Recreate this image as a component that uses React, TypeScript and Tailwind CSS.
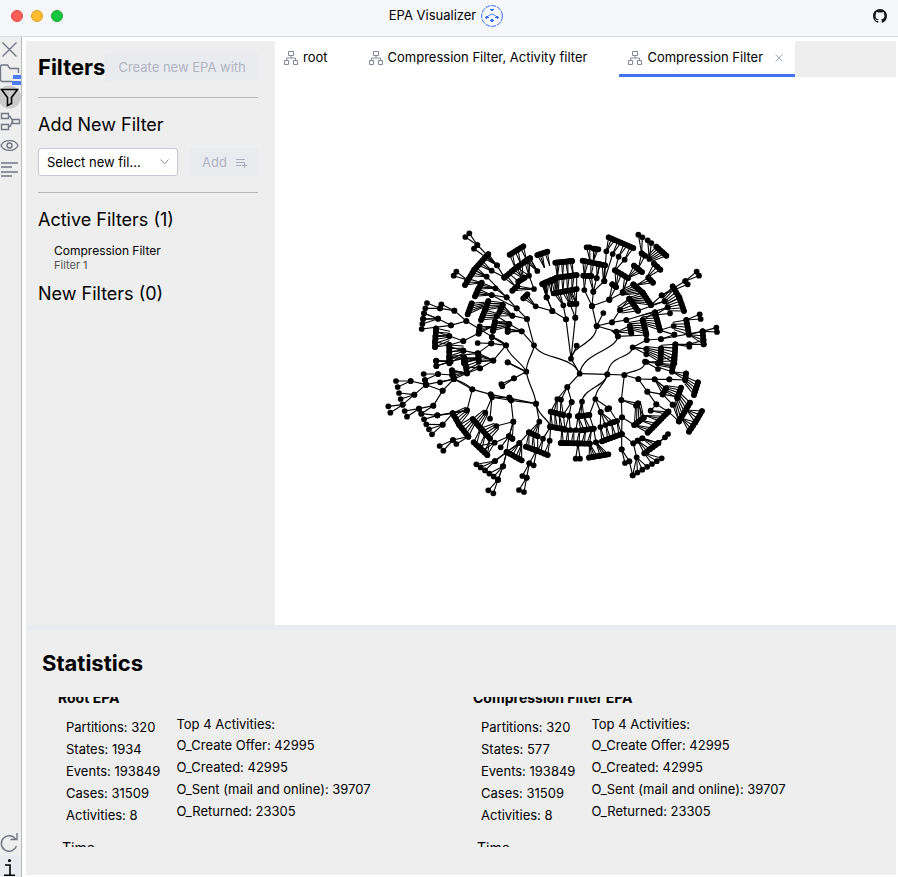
import React from "react";

// Tree drawing. Every quadrant has its own origin.
// link: parent x, y followed by its children
// fan: parent x, y, first child x, y, last child x, y, number of children
// row: first and last parent, number of parents, first and last child, number of children
type Quadrant = { x: number; y: number; links: number[][]; fans: number[][]; rows: number[][]; curves: string[] };

const quadrants: Quadrant[] = [
  {
    x: 0,
    y: 0,
    links: [
      [292, 60, 268, 25, 256, 36], [351, 121, 292, 60, 282, 71], [373, 157, 351, 121, 335, 137],
      [262, 165, 229, 140, 221, 152], [380, 217, 346, 190, 335, 210, 320, 155],
      [410, 250, 380, 217, 335, 210], [441, 282, 397, 272, 410, 250], [397, 272, 368, 240, 350, 273],
      [425, 319, 388, 297, 383, 312, 383, 320], [388, 297, 345, 290, 350, 273],
      [462, 361, 441, 282, 425, 319], [378, 361, 336, 336, 334, 355, 259, 288], [334, 355, 293, 354],
      [223, 257, 184, 238, 180, 250], [259, 288, 223, 257, 213, 301], [213, 301, 174, 281, 125, 312],
      [174, 281, 132, 265, 129, 283], [180, 250, 141, 234, 136, 250],
      [208, 333, 168, 320, 166, 335], [250, 348, 208, 333, 208, 360], [296, 325, 250, 348],
      [208, 360, 165, 350, 165, 366], [250, 377, 208, 365, 208, 380], [293, 385, 250, 377, 208, 395],
      [334, 355, 293, 385], [340, 406, 378, 361, 295, 390], [295, 400, 252, 400, 252, 412],
      [252, 400, 208, 398, 208, 410], [208, 408, 168, 408],
      [472, 138, 450, 100], [462, 192, 447, 152], [500, 217, 487, 177, 493, 180],
      [517, 258, 467, 244, 500, 217], [383, 412], [336, 336, 339, 317],
    ],
    fans: [
      [472, 138, 450, 100, 436, 108, 3],
      [346, 190, 305, 173, 295, 192, 4], [335, 210, 295, 192, 285, 214, 4],
      [310, 240, 275, 235, 263, 268, 5], [368, 240, 325, 228, 315, 255, 5],
      [350, 273, 315, 255, 303, 285, 5], [397, 272, 368, 240, 358, 262, 4], [335, 305, 299, 304, 296, 326, 4],
      [388, 297, 345, 290, 339, 317, 5], [425, 319, 383, 312, 383, 320, 2], [174, 281, 132, 265, 127, 297, 3],
      [208, 333, 168, 310, 165, 366, 6], [250, 377, 208, 360, 208, 415, 6], [295, 400, 252, 398, 252, 415, 3],
      [340, 406, 295, 385, 296, 405, 3], [447, 152, 434, 158, 415, 170, 4], [462, 192, 412, 183, 397, 197, 3],
      [467, 244, 430, 220, 442, 208, 3],
    ],
    rows: [
      [351, 121, 320, 155, 3, 325, 87, 283, 134, 8], [320, 155, 305, 173, 2, 283, 134, 255, 180, 6],
      [405, 128, 440, 106, 3, 389, 89, 430, 64, 6], [405, 183, 447, 152, 4, 373, 158, 410, 127, 6],
      [430, 165, 447, 152, 2, 410, 127, 450, 100, 6], [493, 127, 509, 121, 2, 472, 90, 502, 80, 5],
      [500, 217, 525, 210, 2, 487, 177, 525, 165, 5],
    ],
    curves: ["M378 361C385 395 425 410 439 440", "M462 361C462 385 438 405 439 440", "M462 361C485 405 575 390 599 446", "M336 336Q365 345 378 361", "M383 412Q405 425 439 440"],
  },
  {
    x: 510,
    y: 0,
    links: [
      [7, 258, -10, 217], [48, 283, 7, 258, 40, 241], [63, 401, 48, 283, 76, 278, 80, 362], [76, 278, 60, 237, 79, 236],
      [126, 243, 103, 195, 130, 200], [140, 303, 126, 243], [160, 264, 140, 303], [130, 200, 140, 159, 163, 168],
      [163, 168, 165, 121], [140, 159, 150, 118], [218, 203, 234, 159], [178, 224, 187, 178, 198, 186],
      [126, 243, 178, 224], [178, 224, 218, 203], [210, 255, 238, 221], [186, 292, 210, 255, 229, 285], [140, 303, 186, 292],
      [275, 85, 265, 29, 277, 37], [298, 102, 293, 46, 304, 54], [335, 211, 406, 168, 413, 178],
      [406, 168, 440, 140, 447, 152], [303, 240, 335, 211, 344, 229], [264, 257, 344, 229], [229, 285, 353, 247],
      [315, 270, 353, 247, 360, 265], [278, 285, 315, 262], [330, 316, 371, 303, 373, 329],
      [409, 285, 449, 268, 452, 282], [204, 334, 289, 330], [248, 367, 290, 345, 289, 372],
      [290, 345, 333, 342], [333, 342, 373, 329, 458, 319], [458, 319, 499, 308, 501, 321],
      [376, 358, 418, 358, 418, 365], [418, 358, 461, 345, 461, 358], [289, 411, 331, 410],
      [163, 168, 169, 79, 188, 87], [195, 136, 206, 95, 224, 104],
    ],
    fans: [
      [60, 110, 60, 109, 66, 108, 2], [60, 200, 60, 237, 79, 236, 3],
      [120, 108, 110, 67, 119, 67, 2], [130, 108, 131, 71, 145, 73, 3],
      [198, 186, 187, 178, 198, 186, 2], [298, 102, 319, 65, 349, 92, 6],
      [265, 130, 275, 85, 285, 92, 2], [234, 159, 252, 122, 276, 141, 4], [290, 158, 312, 116, 331, 134, 3],
      [218, 203, 250, 178, 278, 203, 6], [250, 225, 278, 203, 303, 240, 6], [260, 180, 295, 158, 309, 173, 3],
      [210, 255, 238, 221, 264, 257, 5], [344, 229, 368, 184, 388, 218, 5], [353, 247, 388, 218, 402, 258, 5],
      [278, 285, 315, 262, 330, 316, 7], [239, 303, 278, 285, 289, 327, 6], [200, 321, 239, 303, 244, 325, 3],
      [186, 318, 199, 320, 204, 334, 2], [371, 303, 409, 285, 417, 329, 5], [417, 329, 458, 319, 461, 358, 4],
      [333, 375, 376, 358, 373, 415, 6], [289, 375, 333, 370, 331, 412, 6], [248, 367, 289, 372, 289, 388, 2],
    ],
    rows: [
      [22, 157, 70, 150, 4, 16, 113, 66, 108, 9], [-10, 217, 20, 203, 3, -20, 175, 20, 158, 6],
      [25, 202, 80, 192, 5, 20, 158, 80, 150, 9], [40, 241, 79, 236, 3, 12, 205, 80, 192, 9],
      [103, 152, 160, 165, 4, 98, 107, 165, 121, 9], [103, 195, 130, 200, 2, 100, 152, 124, 153, 4],
      [169, 79, 224, 104, 4, 176, 37, 250, 69, 9], [198, 186, 218, 203, 2, 195, 136, 234, 159, 5],
    ],
    curves: ["M63 401C63 365 140 355 140 303", "M89 446C100 380 195 380 204 334", "M172 448C180 385 240 405 248 367", "M63 401L89 446", "M140 303L199 320"],
  },
  {
    x: 0,
    y: 405,
    links: [
      [222, 57, 180, 67], [216, 45, 174, 42], [174, 42, 131, 42, 135, 60], [138, 74, 92, 63, 135, 60], [92, 63, 48, 63, 53, 81],
      [222, 57, 138, 74], [188, 92, 138, 74, 160, 137], [138, 74, 103, 104], [103, 104, 57, 99, 62, 117, 68, 134], [68, 134, 25, 139, 31, 158],
      [160, 137, 117, 146, 124, 161], [117, 146, 74, 153, 81, 170], [172, 166, 132, 178, 124, 161],
      [188, 194, 139, 193, 147, 208, 156, 223], [218, 160, 172, 166, 188, 194], [222, 57, 188, 92, 277, 88],
      [277, 88, 261, 151, 332, 103], [261, 151, 218, 160, 172, 166], [219, 240, 179, 258, 190, 272],
      [265, 230, 219, 240, 229, 252], [336, 112, 316, 158, 330, 176, 388, 113], [400, 185, 349, 198, 387, 229],
      [393, 121, 400, 185, 468, 131], [387, 229, 397, 236, 362, 262, 380, 276], [387, 229, 344, 248],
      [354, 359, 325, 391, 340, 400], [380, 276, 345, 303, 369, 319], [418, 249, 380, 276], [447, 217, 418, 249],
      [468, 131, 478, 185, 332, 103], [512, 200, 489, 236, 509, 242], [470, 270, 448, 310, 461, 316],
      [448, 310, 427, 348, 440, 353], [440, 353, 417, 390, 432, 396], [402, 55, 364, 72, 367, 79], [439, 35, 402, 55, 383, 7],
      [300, 25, 261, 40, 258, 20], [340, 2, 300, 25, 296, 5], [261, 40, 216, 31, 222, 57], [212, 5, 169, 3, 169, 18],
      [369, 319, 354, 359],
    ],
    fans: [
      [212, 4, 169, 2, 169, 18, 2], [258, 38, 216, 31, 220, 52, 4], [296, 4, 254, -4, 261, 40, 5],
      [261, 151, 218, 160, 238, 195, 5], [277, 185, 238, 195, 265, 230, 5], [316, 158, 278, 177, 302, 205, 5],
      [349, 198, 302, 205, 330, 236, 5], [344, 248, 295, 258, 322, 285, 3], [380, 276, 345, 303, 369, 319, 2],
      [478, 185, 447, 217, 473, 229, 4],
      [400, 185, 387, 229, 397, 236, 2], [336, 112, 388, 113, 393, 121, 2],
    ],
    rows: [
      [302, 205, 330, 236, 3, 281, 247, 322, 285, 6], [345, 303, 369, 319, 2, 289, 313, 354, 359, 6],
      [418, 249, 425, 253, 2, 380, 276, 425, 301, 6], [447, 217, 473, 229, 3, 438, 260, 473, 273, 5],
      [489, 236, 509, 242, 2, 473, 273, 503, 285, 4],
    ],
    curves: ["M439 35C445 75 465 95 468 131", "M468 131C475 170 505 175 512 200", "M512 200L525 200", "M222 57Q260 70 277 88"],
  },
  {
    x: 510,
    y: 405,
    links: [
      [89, 41, 52, 81, 172, 43], [172, 43, 223, 45], [223, 45, 214, 120, 265, 57], [265, 57, 314, 58, 292, 95],
      [314, 58, 358, 58, 348, 85], [358, 58, 406, 60], [52, 81, 22, 117, 33, 119, 65, 126],
      [65, 126, 57, 167, 40, 164], [96, 125, 84, 169], [136, 117, 177, 145, 152, 156, 118, 165],
      [177, 145, 172, 148], [152, 156, 151, 201, 166, 195], [214, 120, 264, 130, 258, 137, 216, 172],
      [264, 130, 281, 173], [216, 172, 253, 195, 215, 222], [215, 222, 250, 250, 215, 268], [215, 268, 225, 309, 238, 304],
      [292, 95, 319, 133, 338, 103], [319, 133, 302, 152, 355, 155], [338, 103, 368, 134, 382, 110],
      [368, 134, 387, 184], [355, 155, 387, 184], [325, 249, 345, 232, 354, 222], [277, 235, 325, 249],
      [250, 250, 260, 292, 263, 242], [238, 304, 248, 346],
      [57, 167, 61, 210, 45, 209], [78, 210, 84, 169],
      [119, 251, 138, 247], [131, 206, 138, 247], [285, 5, 324, 10, 324, 27], [324, 10, 368, 20],
      [84, 251, 77, 296, 90, 296],
    ],
    fans: [
      [264, 130, 253, 195, 281, 173, 5], [250, 250, 263, 242, 277, 235, 2],
      [324, 10, 372, -8, 366, 35, 5], [366, 35, 408, 40, 406, 60, 3], [408, 62, 444, 67, 432, 105, 5],
      [348, 85, 393, 83, 382, 115, 5], [314, 58, 348, 85, 338, 103, 3], [382, 113, 420, 128, 387, 184, 7],
      [410, 150, 456, 153, 436, 187, 4], [395, 175, 436, 187, 417, 215, 4],
    ],
    rows: [
      [22, 117, 33, 119, 2, 2, 155, 40, 165, 5], [2, 155, 40, 165, 4, 0, 200, 45, 208, 7],
      [36, 207, 125, 207, 6, 32, 249, 119, 251, 12], [96, 125, 118, 165, 2, 84, 169, 118, 165, 5],
      [84, 169, 118, 165, 3, 93, 211, 131, 206, 5], [119, 251, 138, 247, 2, 117, 293, 175, 283, 8],
      [151, 201, 201, 183, 4, 156, 244, 215, 222, 8], [152, 156, 177, 145, 2, 180, 190, 201, 183, 3],
      [253, 195, 302, 152, 4, 293, 218, 355, 155, 10], [263, 242, 277, 235, 2, 283, 280, 325, 249, 6],
      [260, 292, 283, 280, 2, 248, 346, 335, 295, 7],
    ],
    curves: ["M172 43C165 80 100 85 96 125", "M172 43C165 75 135 85 136 117", "M223 45C235 32 285 35 285 5"],
  },
];

function Fan({ spec }: { spec: number[] }) {
  const [px, py, x1, y1, x2, y2, n] = spec;
  const children = Array.from({ length: n }, (_, k) => {
    const t = n > 1 ? k / (n - 1) : 0;
    return [x1 + (x2 - x1) * t, y1 + (y2 - y1) * t];
  });
  const spacing = Math.hypot(x2 - x1, y2 - y1) / (n - 1);
  const spread = n >= 5 ? 0.5 : 0;
  const mx = (x1 + x2) / 2;
  const my = (y1 + y2) / 2;
  return (
    <g>
      {spacing < 14 && <path d={`M${x1} ${y1}L${x2} ${y2}`} strokeWidth="16" />}
      {children.map(([x, y], k) => (
        <g key={k}>
          <path d={`M${px + (x - mx) * spread} ${py + (y - my) * spread}L${x} ${y}`} strokeWidth="3.2" />
          <circle cx={x} cy={y} r="8.6" fill="black" stroke="none" />
        </g>
      ))}
    </g>
  );
}

function Row({ spec }: { spec: number[] }) {
  const [ax, ay, bx, by, m, x1, y1, x2, y2, n] = spec;
  const spacing = Math.hypot(x2 - x1, y2 - y1) / (n - 1);
  return (
    <g>
      {spacing < 14 && <path d={`M${x1} ${y1}L${x2} ${y2}`} strokeWidth="16" />}
      {Array.from({ length: n }, (_, k) => {
        const t = k / (n - 1);
        const p = Math.floor((k * m) / n) / (m - 1);
        const x = x1 + (x2 - x1) * t;
        const y = y1 + (y2 - y1) * t;
        return (
          <g key={k}>
            <path d={`M${ax + (bx - ax) * p} ${ay + (by - ay) * p}L${x} ${y}`} strokeWidth="3.2" />
            <circle cx={x} cy={y} r="8.6" fill="black" stroke="none" />
          </g>
        );
      })}
    </g>
  );
}

function EpaGraph() {
  return (
    <svg viewBox="0 0 1035 825" className="w-[345px]" role="img" aria-label="EPA graph">
      {quadrants.map((q, i) => (
        <g key={i} transform={`translate(${q.x} ${q.y})`} stroke="black" strokeLinecap="round" fill="none">
          {q.curves.map((d) => <path key={d} d={d} strokeWidth="3.6" />)}
          {q.links.map((l, j) => {
            const parts: React.ReactNode[] = [];
            for (let k = 0; k < l.length; k += 2) {
              parts.push(<path key={k} d={`M${l[0]} ${l[1]}L${l[k]} ${l[k + 1]}`} strokeWidth="3.4" />);
              parts.push(<circle key={`c${k}`} cx={l[k]} cy={l[k + 1]} r="8.6" fill="black" stroke="none" />);
            }
            return <g key={j}>{parts}</g>;
          })}
          {q.fans.map((f, j) => <Fan key={j} spec={f} />)}
          {q.rows.map((r, j) => <Row key={j} spec={r} />)}
        </g>
      ))}
    </svg>
  );
}

function Logo() {
  return (
    <svg width="22" height="22" viewBox="0 0 22 22" fill="none" stroke="#2f6bf2" aria-hidden="true">
      <circle cx="11" cy="11" r="10.4" strokeDasharray="5 1" />
      <path d="M11 9L7 11M11 9L15 11" strokeWidth="0.8" />
      <g fill="#2f6bf2" stroke="none">
        <path d="M9 4h4v1h-1v1h-2V5H9zM9 15h1v-1h2v1h1v1h-1v1h-2v-1H9zM4 12h1v-1h2v1h1v1H6v1H5v-1H4zM14 12h1v-1h2v1h1v1h-1v1h-1v-1h-2z" />
      </g>
    </svg>
  );
}

function HierarchyIcon() {
  return (
    <svg width="14" height="14" viewBox="0 0 14 14" fill="none" stroke="#85889a" aria-hidden="true">
      <path d="M4.500.500h5v4h-5zM.500 9.500h4v4h-4zM9.500 9.500h4v4h-4zM7 4.500V7M2.500 9.500V7h9v2.500" />
    </svg>
  );
}

const sideIcons: { label: string; drawing: React.ReactNode }[] = [
  { label: "Close", drawing: <path d="M2.500 5.500l14 14M16.500 5.500l-14 14" /> },
  {
    label: "Files",
    drawing: (
      <>
        <path d="M12 20.500H2L0.500 19.500V5L1.500 4H7.500L10 7.500H18.500V12" />
        <path d="M13 14h8v4h-8zM12 20h9v4h-9z" fill="#4c7cf3" stroke="none" />
      </>
    ),
  },
  {
    label: "Filters",
    drawing: (
      <>
        <circle cx="9.500" cy="12" r="11.500" fill="#cacaca" stroke="none" />
        <path d="M1.500 4.500H17.500L11.500 12.500V18.500L7.500 20.500V12.500Z" stroke="black" strokeWidth="1.600" />
      </>
    ),
  },
  { label: "Layout", drawing: <path d="M1.500 4.500h7v5h-7zM1.500 15.500h7v5h-7zM12.500 10.500h7v4h-7zM8.500 7.500H10L12.500 12L10 17.500H8.500" /> },
  {
    label: "View",
    drawing: (
      <>
        <path d="M1 12.500C4 6 15 6 18 12.500C15 19 4 19 1 12.500Z" />
        <circle cx="9.500" cy="12.500" r="2.500" />
      </>
    ),
  },
  { label: "Statistics", drawing: <path d="M1 6h17M1 10h11M1 15h17M1 19h11" /> },
];

function SideButton({ label, children }: { label: string; children: React.ReactNode }) {
  return (
    <button aria-label={label} className="block h-6 w-[21px] shrink-0">
      <svg width="21" height="24" viewBox="0 0 21 24" fill="none" stroke="#737785" strokeWidth="1.400">
        {children}
      </svg>
    </button>
  );
}

function Tab({ label, active = false }: { label: string; active?: boolean }) {
  return (
    <div className={`flex h-9 shrink-0 items-center border-b-[3px] bg-white pr-3 pl-[9px] ${active ? "border-[#4472f0]" : "border-white"}`}>
      <button role="tab" aria-selected={active} className="flex items-center gap-[5px] whitespace-nowrap">
        <HierarchyIcon />
        {label}
      </button>
      <span className="ml-3 w-2">
        {active && (
          <button aria-label="Close tab" className="block">
            <svg width="8" height="8" viewBox="0 0 8 8" stroke="#a5a8ba"><path d="M.5.5l7 7M7.500.500l-7 7" /></svg>
          </button>
        )}
      </span>
    </div>
  );
}

const activities = ["O_Create Offer: 42995", "O_Created: 42995", "O_Sent (mail and online): 39707", "O_Returned: 23305"];

function Stats({ title, states }: { title: string; states: number }) {
  const facts = ["Partitions: 320", `States: ${states}`, "Events: 193849", "Cases: 31509", "Activities: 8"];
  return (
    <section className="-mt-[9px] pl-4">
      <h3 className="text-[14px] leading-5 font-bold">{title}</h3>
      <div className="mt-[7px] flex gap-4 pl-2 leading-[22px]">
        <ul className="pt-px">{facts.map((f) => <li key={f}>{f}</li>)}</ul>
        <div>
          <p className="leading-[19px]">Top 4 Activities:</p>
          <ul>{activities.map((a) => <li key={a}>{a}</li>)}</ul>
        </div>
      </div>
      <p className="mt-3 pl-1 text-[14px] leading-5">Time</p>
    </section>
  );
}

export default function App() {
  return (
    <div className="flex h-screen flex-col overflow-hidden bg-white font-['Inter',sans-serif] text-[13px] text-black">
      <header className="grid h-[37px] shrink-0 grid-cols-[1fr_auto_1fr] items-center border-b border-[#dcdde1] bg-[#f6f7fa] pb-1">
        <div className="flex gap-2 pl-[11px]">
          <span className="size-3 rounded-full border border-[#e0443e] bg-[#ff5f57]" />
          <span className="size-3 rounded-full border border-[#dea123] bg-[#febc2e]" />
          <span className="size-3 rounded-full border border-[#14a830] bg-[#19c63f]" />
        </div>
        <h1 className="flex items-center gap-[5px] pr-[6px]">EPA Visualizer <Logo /></h1>
        <a href="#github" aria-label="GitHub" className="mr-[11px] justify-self-end">
          <svg width="14" height="14" viewBox="0 0 16 16" fill="#171717">
            <path d="M8 0C3.580 0 0 3.580 0 8c0 3.540 2.290 6.530 5.470 7.590.4.070.55-.17.55-.38 0-.19-.01-.82-.01-1.490-2.010.37-2.530-.49-2.690-.94-.09-.23-.48-.94-.82-1.130-.28-.15-.68-.52-.01-.53.63-.01 1.080.58 1.230.82.72 1.210 1.870.87 2.330.66.07-.52.28-.87.51-1.070-1.780-.2-3.640-.89-3.640-3.950 0-.87.31-1.590.82-2.150-.08-.2-.36-1.020.08-2.120 0 0 .67-.21 2.200.82A7.600 7.600 0 018 3.860c.68 0 1.360.09 2 .27 1.530-1.040 2.200-.82 2.200-.82.44 1.100.16 1.920.08 2.120.51.56.82 1.270.82 2.150 0 3.070-1.870 3.750-3.650 3.950.29.25.54.73.54 1.480 0 1.070-.01 1.930-.01 2.200 0 .21.15.46.55.38A8.010 8.010 0 0016 8c0-4.420-3.580-8-8-8z" />
          </svg>
        </a>
      </header>

      <div className="flex min-h-0 flex-1">
        <nav className="flex w-[22px] shrink-0 flex-col border-r border-[#b8b8b8] bg-[#eeeeee]">
          {sideIcons.map((s) => <SideButton key={s.label} label={s.label}>{s.drawing}</SideButton>)}
          <div className="mt-auto">
            <SideButton label="Reload"><path d="M15.500 8A7.800 7.800 0 1 0 16.500 15M17 2V8.500H10.500" /></SideButton>
          </div>
          <button aria-label="Info" className="h-[22px] w-full bg-[#e9ebf0] text-black">
            <svg width="21" height="22" viewBox="0 0 21 22" stroke="black" strokeWidth="1.600" fill="none">
              <path d="M5 10H10V20M4 20.200H15" /><circle cx="9.500" cy="5.500" r=".8" fill="black" />
            </svg>
          </button>
        </nav>

        <main className="flex min-w-0 flex-1 flex-col pt-1 pr-[2px] pb-[2px] pl-1">
          <div className="flex min-h-0 flex-1">
            <aside className="w-[249px] shrink-0 bg-[#eeeeee] pr-[17px] pl-3">
              <div className="flex h-[57px] items-center justify-between border-b border-[#b8b8b8] pb-1">
                <h2 className="text-[22px] font-bold">Filters</h2>
                <button disabled className="h-7 min-w-0 rounded-[3px] bg-[#eaebef] px-[13px] pt-px whitespace-nowrap text-[#b1b4c3]">Create new EPA with</button>
              </div>
              <h3 className="mt-[14px] text-lg leading-[26px]">Add New Filter</h3>
              <div className="mt-[10px] flex gap-3 border-b border-[#b8b8b8] pb-4">
                <div className="relative min-w-0 flex-1">
                  <select aria-label="New filter" className="h-7 w-full appearance-none rounded-[3px] border border-[#c5c8d8] bg-white pt-px pr-6 pl-2">
                    <option>Select new fil...</option>
                  </select>
                  <svg className="pointer-events-none absolute top-[11px] right-[9px]" width="9" height="6" viewBox="0 0 9 6" fill="none" stroke="#9093a3"><path d="M.5.5l4 4.500 4-4.500" /></svg>
                </div>
                <button disabled className="flex h-7 items-center gap-[9px] rounded-[3px] bg-[#eaebef] pt-px pr-[11px] pl-3 text-[#b1b4c3]">
                  Add
                  <svg width="11" height="10" viewBox="0 0 11 10" fill="none" stroke="#a9acbb"><path d="M0 1.500h9M0 4.500h9M0 7.500h5M8.500 5v5M6 7.500h5" /></svg>
                </button>
              </div>
              <h3 className="mt-[14px] text-lg leading-[26px]">Active Filters (1)</h3>
              <div className="mt-[10px] pl-4">
                <p className="text-[12px] leading-4">Compression Filter</p>
                <p className="text-[11px] leading-[13px] text-[#555555]">Filter 1</p>
              </div>
              <h3 className="mt-[9px] text-lg leading-[26px]">New Filters (0)</h3>
            </aside>

            <section className="flex min-w-0 flex-1 flex-col">
              <div role="tablist" className="flex shrink-0 overflow-hidden bg-[#eeeeee]">
                <Tab label="root" />
                <Tab label="Compression Filter, Activity filter" />
                <Tab label="Compression Filter" active />
              </div>
              <div className="flex flex-1 justify-center pt-[148px] pr-[66px]">
                <div><EpaGraph /></div>
              </div>
            </section>
          </div>

          <section className="h-[250px] shrink-0 border-t-[5px] border-[#e9ebf0] bg-[#eeeeee] pt-[17px] pr-6 pl-4">
            <h2 className="text-[22px] leading-8 font-bold">Statistics</h2>
            <div className="mt-[18px] grid h-[150px] grid-cols-2 overflow-hidden">
              <Stats title="Root EPA" states={1934} />
              <Stats title="Compression Filter EPA" states={577} />
            </div>
          </section>
        </main>
      </div>
    </div>
  );
}
